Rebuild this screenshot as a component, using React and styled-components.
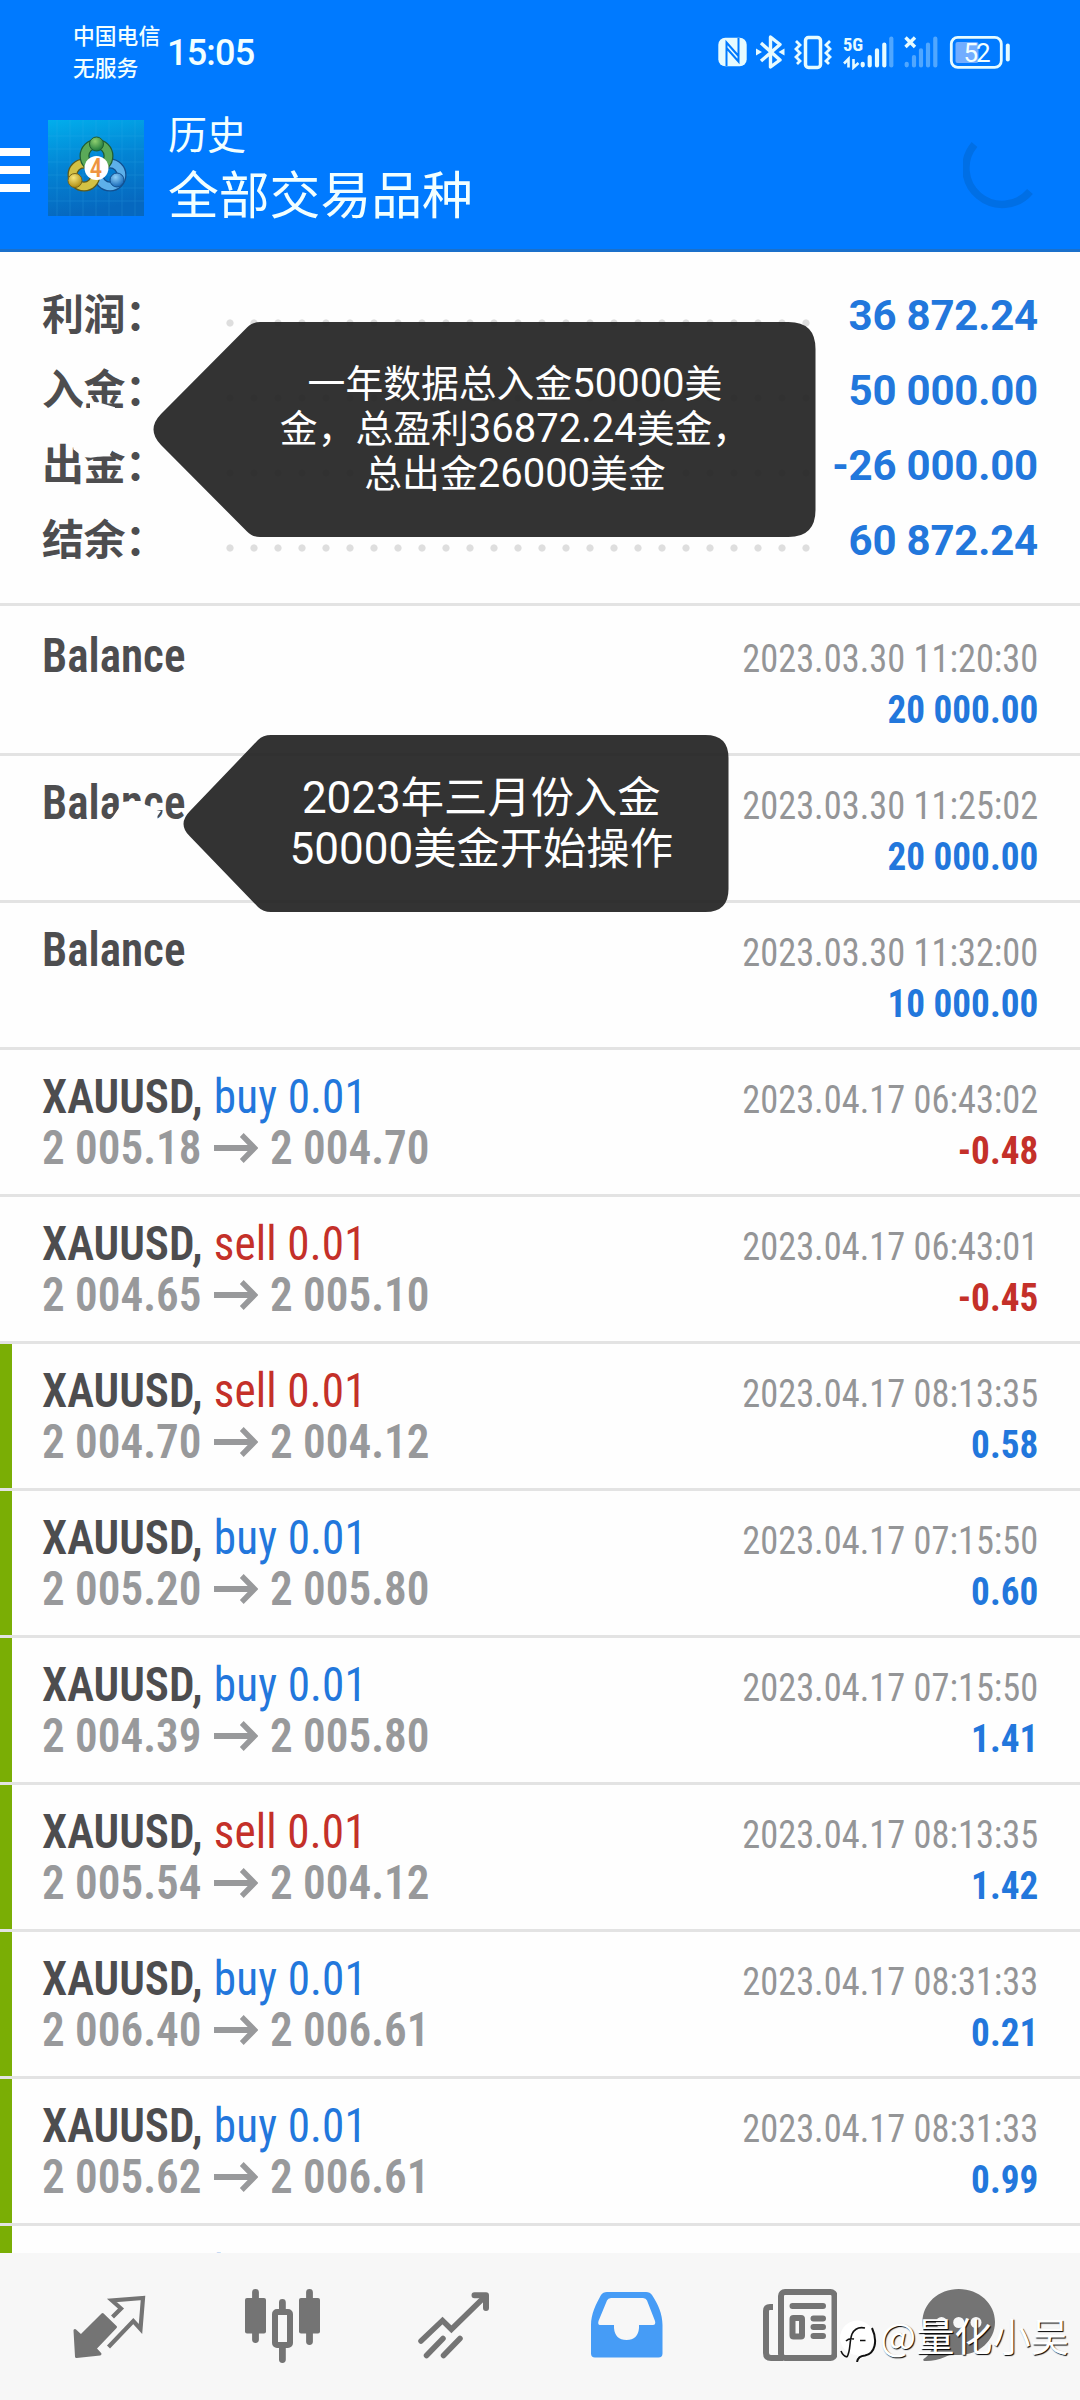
import React from 'react';
import styled, { createGlobalStyle } from 'styled-components';

const GlobalStyle = createGlobalStyle`
  * {
    box-sizing: border-box;
  }

  body {
    margin: 0;
    background: #fff;
    font-family: 'Roboto', 'Noto Sans CJK SC', sans-serif;
  }

  svg {
    display: block;
    flex: none;
  }
`;

const Screen = styled.div`
  position: relative;
  display: flex;
  flex-direction: column;
  width: 1080px;
  height: 2400px;
  overflow: hidden;
  background: #fefefe;
`;

const Header = styled.header`
  flex: none;
  height: 252px;
  background: #007aff;
  border-bottom: 3px solid #1a70cb;
  color: #f2ffff;
`;

const StatusBar = styled.div`
  display: flex;
  align-items: center;
  height: 84px;
  padding: 20px 70px 0 73px;
`;

const Carrier = styled.div`
  width: 88px;
  margin-top: -2px;
  font-family: 'Noto Sans CJK SC', sans-serif;
  font-size: 21.8px;
  font-weight: 500;
  line-height: 32px;
  white-space: nowrap;
`;

const Clock = styled.div`
  margin: 1px 0 0 6px;
  font-size: 36px;
  font-weight: 500;
  font-stretch: 92%;
  line-height: 40px;
  letter-spacing: -0.8px;
`;

const StatusIcons = styled.div`
  display: flex;
  align-items: center;
  margin-left: auto;
`;

const TitleBar = styled.div`
  display: flex;
  align-items: center;
  height: 168px;
  padding-right: 41px;
`;

const MenuButton = styled.div`
  display: flex;
  flex-direction: column;
  justify-content: space-between;
  width: 30px;
  height: 44px;
  margin-top: 4px;

  span {
    height: 8px;
    background: #fff;
  }
`;

const AppIconBox = styled.div`
  margin-left: 18px;
`;

const Titles = styled.div`
  flex: 1;
  margin: -3px 0 0 24px;
  font-family: 'Noto Sans CJK SC', sans-serif;
  font-weight: 400;
`;

const Subtitle = styled.div`
  font-size: 39px;
  line-height: 50px;
`;

const Title = styled.div`
  font-size: 50.8px;
  line-height: 70px;
`;

const Summary = styled.section`
  flex: none;
  height: 354px;
  padding: 26px 42px 0;
  border-bottom: 3px solid #e3e3e3;
`;

const SummaryRow = styled.div`
  display: flex;
  align-items: baseline;
  height: 75px;
`;

const SummaryLabel = styled.div`
  width: 176px;
  font-family: 'Noto Sans CJK SC', sans-serif;
  font-size: 42px;
  font-weight: 700;
  line-height: 60px;
  letter-spacing: -0.5px;
  color: #4d4d4f;
`;

const Dots = styled.div`
  align-self: flex-start;
  width: 600px;
  height: 8px;
  margin-top: 41px;
  background: radial-gradient(circle at 12px 4px, #dedede 3.2px, transparent 4px) 0 0 / 24px 8px;
`;

const SummaryValue = styled.div`
  flex: 1;
  display: flex;
  justify-content: flex-end;
  font-size: 42px;
  font-weight: 700;
  line-height: 75px;
  letter-spacing: -0.2px;
  white-space: nowrap;
  color: #2277dc;
`;

const List = styled.main`
  flex: 1;
  min-height: 0;
  overflow: hidden;
`;

const Deal = styled.div`
  display: flex;
  justify-content: space-between;
  height: ${(props) => (props.$first ? 150 : 147)}px;
  padding: ${(props) => (props.$first ? 3 : 0)}px 42px 0 30px;
  border-bottom: 3px solid #e3e3e3;

  &::before {
    content: '';
    flex: none;
    width: 12px;
    height: 144px;
    margin-left: -30px;
    background: ${(props) => (props.$closed ? '#7aae05' : 'transparent')};
  }
`;

const DealInfo = styled.div`
  flex: 1;
  padding: 21px 0 0 30px;
  font-size: 48px;
  font-stretch: 75%;
  line-height: 51px;
  white-space: nowrap;
  transform: scaleX(0.94);
  transform-origin: 30px 0;
`;

const Symbol = styled.div`
  font-weight: 600;
  color: #4d4d4f;
`;

const Side = styled.span`
  margin-left: 1px;
  font-weight: 400;
  letter-spacing: 0.15px;
  color: ${(props) => (props.$side === 'sell' ? '#c43029' : '#2277dc')};
`;

const Prices = styled.div`
  display: flex;
  align-items: center;
  gap: 13px;
  font-weight: 600;
  color: #98999b;
`;

const DealMeta = styled.div`
  padding-top: 25px;
  font-size: 39px;
  font-stretch: 75%;
  line-height: 51px;
  text-align: right;
  white-space: nowrap;
`;

const Time = styled.div`
  font-weight: 400;
  transform: scaleX(0.933);
  transform-origin: 100% 0;
  color: #949597;
`;

const Amount = styled.div`
  font-weight: 700;
  transform: scaleX(0.953);
  transform-origin: 100% 0;
  color: ${(props) => (props.$loss ? '#c43029' : '#2277dc')};
`;

const NavBar = styled.nav`
  flex: none;
  display: flex;
  gap: 96.5px;
  height: 147px;
  padding: 34px 0 0 71px;
  background: #f7f7f7;
  color: #747474;

  svg:last-child {
    margin-left: -13px;
  }
`;

const Overlay = styled.div`
  position: absolute;
  inset: 0;
  z-index: 1;
`;

const Smudges = styled.svg`
  position: absolute;
  left: 0;
  top: 0;
`;

const Callout = styled.div`
  position: absolute;
  left: ${(props) => props.$left}px;
  top: ${(props) => props.$top}px;
  width: ${(props) => props.$width}px;
  height: ${(props) => props.$height}px;
  padding: ${(props) => props.$padding};
  font-family: 'Noto Sans CJK SC', sans-serif;
  font-size: ${(props) => props.$size}px;
  line-height: ${(props) => props.$line}px;
  text-align: center;
  white-space: nowrap;
  color: #fff;

  svg {
    position: absolute;
    left: 0;
    top: 0;
    z-index: -1;
    fill: rgba(36, 36, 36, 0.93);
  }
`;

const Digits = styled.span`
  font-family: 'Roboto', sans-serif;
  font-size: ${(props) => props.$size}px;
  line-height: 1;
`;

const Watermark = styled.div`
  position: absolute;
  left: 838px;
  top: 2307px;
  display: flex;
  align-items: center;
  font-family: 'Noto Sans CJK SC', sans-serif;
  font-size: 38.2px;
  line-height: 56px;
  white-space: nowrap;
  color: #fff;
  text-shadow: 1px 1px 1px #000;
`;

const summary = [
  ['利润', '36 872.24'],
  ['入金', '50 000.00'],
  ['出金', '-26 000.00'],
  ['结余', '60 872.24'],
];

const deals = [
  { time: '2023.03.30 11:20:30', amount: '20 000.00' },
  { time: '2023.03.30 11:25:02', amount: '20 000.00' },
  { time: '2023.03.30 11:32:00', amount: '10 000.00' },
  { side: 'buy', open: '2 005.18', close: '2 004.70', time: '2023.04.17 06:43:02', amount: '-0.48' },
  { side: 'sell', open: '2 004.65', close: '2 005.10', time: '2023.04.17 06:43:01', amount: '-0.45' },
  { side: 'sell', open: '2 004.70', close: '2 004.12', time: '2023.04.17 08:13:35', amount: '0.58', closed: true },
  { side: 'buy', open: '2 005.20', close: '2 005.80', time: '2023.04.17 07:15:50', amount: '0.60', closed: true },
  { side: 'buy', open: '2 004.39', close: '2 005.80', time: '2023.04.17 07:15:50', amount: '1.41', closed: true },
  { side: 'sell', open: '2 005.54', close: '2 004.12', time: '2023.04.17 08:13:35', amount: '1.42', closed: true },
  { side: 'buy', open: '2 006.40', close: '2 006.61', time: '2023.04.17 08:31:33', amount: '0.21', closed: true },
  { side: 'buy', open: '2 005.62', close: '2 006.61', time: '2023.04.17 08:31:33', amount: '0.99', closed: true },
];

const StatusGlyphs = () => (
  <svg width="293" height="36" viewBox="717 34 293 36" fill="none" stroke="#e6fbff">
    {/* nfc */}
    <rect x="718.3" y="37.8" width="28.4" height="28.4" rx="7" fill="#e6fbff" stroke="none" />
    <path d="M726.5 66V42.5L738.5 56V46M738.5 38v23.5L726.5 48" stroke="#007aff" strokeWidth="2" />
    {/* bluetooth */}
    <path d="M761 43L780 60L770.5 67V37L780 44.5L761 61" strokeWidth="3.4" strokeLinejoin="round" />
    <path d="M756 48.5l6 3.5l-6 3.5zM784.5 48.5l-6 3.5l6 3.5z" fill="#e6fbff" stroke="none" />
    {/* vibrate */}
    <rect x="805.5" y="37.5" width="15" height="30" rx="3" strokeWidth="3.5" />
    <path d="M796 41l4 4l-4 4l4 4l-4 4l4 4l-3 3M830 41l-4 4l4 4l-4 4l4 4l-4 4l3 3" strokeWidth="2.8" />
    {/* 5G */}
    <text x="843" y="50.5" fontSize="18.5" fontWeight="700" fontStretch="75%" fill="#e6fbff" stroke="none">5G</text>
    <path d="M848.5 67.5v-8.5l-4.5 4.5M853.5 59v8.5l5-4.5" strokeWidth="2.6" />
    <path d="M862.7 63.8v1.5M869.7 57v8.5M877 50.3v15.2M884.3 44.5v21" strokeWidth="4.2" strokeLinecap="round" />
    <path d="M891.3 38.5v27" strokeWidth="4.2" strokeLinecap="round" opacity="0.35" />
    {/* second sim */}
    <path d="M905.5 37.5l9.5 9.5M915 37.5l-9.5 9.5" strokeWidth="3.4" />
    <path d="M906.7 63.8v1.5M914 57v8.5M921 50.3v15.2M928 44.5v21M935.3 38.5v27" strokeWidth="4.2" strokeLinecap="round" opacity="0.35" />
    {/* battery */}
    <rect x="951.3" y="37.3" width="50" height="30" rx="6.5" strokeWidth="2.8" />
    <rect x="955.5" y="42" width="23" height="21" rx="2" fill="#72adff" stroke="none" />
    <path d="M1007.8 45.5v14" strokeWidth="4" strokeLinecap="round" />
    <text x="977" y="61.7" fontSize="26" textAnchor="middle" fill="#f2ffff" stroke="none" textLength="27">52</text>
  </svg>
);

const AppIcon = () => (
  <svg width="96" height="96" viewBox="0 0 96 96">
    <defs>
      <linearGradient id="sky" x1="0" y1="0" x2="0.2" y2="1">
        <stop offset="0" stopColor="#02aeec" />
        <stop offset="0.5" stopColor="#0384d4" />
        <stop offset="1" stopColor="#0668bf" />
      </linearGradient>
      <radialGradient id="green" cx="0.4" cy="0.3" r="0.7">
        <stop offset="0" stopColor="#8fd070" />
        <stop offset="1" stopColor="#1f7a3c" />
      </radialGradient>
      <radialGradient id="yellow" cx="0.4" cy="0.3" r="0.7">
        <stop offset="0" stopColor="#f8e77c" />
        <stop offset="1" stopColor="#b08d12" />
      </radialGradient>
      <radialGradient id="blue" cx="0.4" cy="0.3" r="0.7">
        <stop offset="0" stopColor="#8fd0f8" />
        <stop offset="1" stopColor="#1668b8" />
      </radialGradient>
    </defs>
    <rect width="96" height="96" fill="url(#sky)" />
    <path d="M9 0v96M22 0v96M35 0v96M48 0v96M61 0v96M74 0v96M87 0v96M0 16h96M0 29h96M0 42h96M0 55h96M0 68h96M0 81h96" stroke="#3fb4ee" strokeWidth="0.8" opacity="0.25" />
    <g fill="none">
      <circle cx="62" cy="55" r="11.5" stroke="#124f8f" strokeWidth="10" />
      <circle cx="62" cy="55" r="11.5" stroke="#5db0ea" strokeWidth="7.5" />
      <circle cx="36" cy="55" r="11.5" stroke="#5c5a1c" strokeWidth="10" />
      <circle cx="36" cy="55" r="11.5" stroke="#d3c144" strokeWidth="7.5" />
      <circle cx="48.5" cy="36" r="12" stroke="#205c33" strokeWidth="10" />
      <circle cx="48.5" cy="36" r="12" stroke="#5aa958" strokeWidth="7.5" />
    </g>
    <circle cx="48.5" cy="24" r="7" fill="url(#green)" stroke="#205c33" />
    <circle cx="27" cy="60.5" r="7" fill="url(#yellow)" stroke="#7a6618" />
    <circle cx="69" cy="60" r="7" fill="url(#blue)" stroke="#124f8f" />
    <circle cx="48.5" cy="48" r="12" fill="#fff" />
    <text x="48" y="57" fontSize="25" fontWeight="500" fontStretch="80%" textAnchor="middle" fill="#ee9440">4</text>
  </svg>
);

const Spinner = () => (
  <svg width="76" height="84" viewBox="962 126 76 84" fill="none">
    <path d="M973.5 144.5A35.5 35.5 0 1 0 1029 191.5" stroke="#006fe5" strokeWidth="7.5" />
  </svg>
);

const Arrow = () => (
  <svg width="47" height="32" viewBox="0 0 47 32" fill="none" stroke="currentColor" strokeWidth="5.8">
    <path d="M0 16h43M29.5 3l13.5 13l-13.5 13" />
  </svg>
);

const NavIcons = () => (
  <>
    <svg width="76" height="80" viewBox="0 0 76 80" fill="none" stroke="currentColor">
      <path d="M4 43.5L10 49L31.6 27.5L44.5 40L24 61.5L29 67L5.5 69.5z" fill="currentColor" strokeWidth="3" strokeLinejoin="round" />
      <path d="M41.5 30L50 21.5L41 13.5L72 11L69.5 42L62.3 34L37.5 60" strokeWidth="4.2" />
    </svg>
    <svg width="76" height="80" viewBox="0 0 76 80" fill="currentColor" stroke="currentColor">
      <path d="M11.5 5.5v47M65.5 5.5v49M38.4 15.5v10M38.4 60v12.5" strokeWidth="6.8" strokeLinecap="round" />
      <rect x="1" y="11" width="21" height="35.5" rx="2" stroke="none" />
      <rect x="55" y="11" width="21" height="35.5" rx="2" stroke="none" />
      <rect x="31" y="25" width="15" height="33" rx="2" fill="#f7f7f7" strokeWidth="6" />
    </svg>
    <svg width="76" height="80" viewBox="0 0 76 80" fill="none" stroke="currentColor" strokeWidth="5.5" strokeLinecap="round" strokeLinejoin="round">
      <path d="M5 54L26.5 33.5L35.4 42.3L69 9.5" strokeLinejoin="miter" />
      <path d="M58.5 8.2H70V21" strokeWidth="6" />
      <path d="M10.5 68.5L27 51.5M27.5 68.5L44 51.5" />
    </svg>
    <svg width="76" height="80" viewBox="0 0 76 80">
      <path fillRule="evenodd" fill="#469cf6" d="M19 5H57Q61 5 63 8C69 17 73.5 27 73.5 38V66.5Q73.5 70.5 69.5 70.5H6Q2 70.5 2 66.5V38C2 27 7 17 12 8Q14 5 18 5zM22 11Q19 11 18 13.5L9.5 34Q8.5 38 11 38H25V41Q26 53 37.5 53T50 41V38H64Q67 38 66 34L58 13.5Q57 11 54 11z" />
    </svg>
    <svg width="76" height="80" viewBox="0 0 76 80" fill="none" stroke="currentColor">
      <rect x="20" y="5" width="53.5" height="66" rx="4" strokeWidth="6" />
      <path d="M12 20H9Q5 20 5 24V66Q5 71 10 71H22" strokeWidth="6" />
      <path d="M31.5 19H62M52.5 31.5H62M52.5 40H62M52.5 49H62" strokeWidth="6" strokeLinecap="round" />
      <rect x="31.5" y="31" width="9.5" height="18.5" rx="1" strokeWidth="6" />
    </svg>
    <svg width="76" height="80" viewBox="0 0 76 80">
      <path fill="currentColor" d="M37.7 2C58 2 74 16.5 74 35S58 68 38 68C32 68 28 67.5 24 70Q14 74.5 3 74Q1 72.5 4 71Q9 67 12 60C5 54 1.5 45 1.5 35C1.5 16.5 17.5 2 37.7 2z" />
      <circle cx="20.5" cy="35.5" r="5.5" fill="#f7f7f7" />
      <circle cx="37.7" cy="35.5" r="5.5" fill="#f7f7f7" />
      <circle cx="55" cy="35.5" r="5.5" fill="#f7f7f7" />
    </svg>
  </>
);

const WatermarkLogo = () => (
  <svg width="42" height="54" viewBox="838 2308 42 54">
    <path d="M857 2320.5A17 17 0 0 1 874 2337C874 2350 868 2356 857.5 2361V2355A17 17 0 0 1 857 2320.5z" fill="#fff" />
    <path d="M847 2357C851 2350 849 2342 852 2334Q856 2326 865 2328M846 2341Q849 2338 854 2339M860 2340.5h5.5M841 2351Q843 2356 847 2357" fill="none" stroke="#111" strokeWidth="1.6" />
    <path d="M872 2328C878 2341 875 2354 865 2355.5Q858 2356 857 2362" fill="none" stroke="#111" strokeWidth="2" />
  </svg>
);

const App = () => (
  <Screen>
    <GlobalStyle />
    <Header>
      <StatusBar>
        <Carrier>中国电信<br />无服务</Carrier>
        <Clock>15:05</Clock>
        <StatusIcons>
          <StatusGlyphs />
        </StatusIcons>
      </StatusBar>
      <TitleBar>
        <MenuButton><span /><span /><span /></MenuButton>
        <AppIconBox><AppIcon /></AppIconBox>
        <Titles>
          <Subtitle>历史</Subtitle>
          <Title>全部交易品种</Title>
        </Titles>
        <Spinner />
      </TitleBar>
    </Header>

    <Summary>
      {summary.map(([label, value]) => (
        <SummaryRow key={label}>
          <SummaryLabel>{label}：</SummaryLabel>
          <Dots />
          <SummaryValue>{value}</SummaryValue>
        </SummaryRow>
      ))}
    </Summary>

    <List>
      {deals.map((deal, index) => (
        <Deal key={index} $first={index === 0} $closed={deal.closed}>
          <DealInfo>
            {deal.side ? (
              <>
                <Symbol>XAUUSD, <Side $side={deal.side}>{deal.side} 0.01</Side></Symbol>
                <Prices>{deal.open}<Arrow />{deal.close}</Prices>
              </>
            ) : (
              <Symbol>Balance</Symbol>
            )}
          </DealInfo>
          <DealMeta>
            <Time>{deal.time}</Time>
            <Amount $loss={deal.amount.startsWith('-')}>{deal.amount}</Amount>
          </DealMeta>
        </Deal>
      ))}
      {/* next row, mostly hidden under the nav bar */}
      <Deal $closed>
        <DealInfo>
          <Symbol>XAUUSD, <Side $side="buy">buy 0.01</Side></Symbol>
        </DealInfo>
      </Deal>
    </List>

    <NavBar>
      <NavIcons />
    </NavBar>

    <Overlay>
      <Smudges width="200" height="840" viewBox="0 0 200 840" fill="#fefefe">
        <path d="M90 401L101.7 403.2L115 407.3V412H90z" />
        <path d="M73.3 443V449.3L79.3 454L85 457.3L90.7 457.7L103.3 456H109.3L112 451V440z" />
        <path d="M110 821L123 802L130 801H141L146 805L152 807L156 810L161 811L157.5 816V821z" />
      </Smudges>
      <Callout $left={153} $top={322} $width={662.5} $height={215} $padding="37px 0 0 61.5px" $size={37.8} $line={44}>
        <svg width="662.5" height="215" viewBox="0 0 662.5 215">
          <path d="M107 0H635.5Q662.5 0 662.5 27V188Q662.5 215 635.5 215H107Q99 215 94 209.5L8 123Q-7 107.5 8 92L94 5.5Q99 0 107 0z" />
        </svg>
        一年数据总入金<Digits $size={40}>50000</Digits>美<br />
        金，总盈利<Digits $size={40}>36872.24</Digits>美金，<br />
        总出金<Digits $size={40}>26000</Digits>美金
      </Callout>
      <Callout $left={183} $top={735} $width={545.5} $height={177} $padding="34px 0 0 51px" $size={43.3} $line={51}>
        <svg width="545.5" height="177" viewBox="0 0 545.5 177">
          <path d="M88 0H522.5Q545.5 0 545.5 23V154Q545.5 177 522.5 177H88Q80 177 75 172L7 101.5Q-6 89 7 76L75 5Q80 0 88 0z" />
        </svg>
        <Digits $size={44}>2023</Digits>年三月份入金<br />
        <Digits $size={44}>50000</Digits>美金开始操作
      </Callout>
      <Watermark>
        <WatermarkLogo />
        @量化小吴
      </Watermark>
    </Overlay>
  </Screen>
);

export default App;
